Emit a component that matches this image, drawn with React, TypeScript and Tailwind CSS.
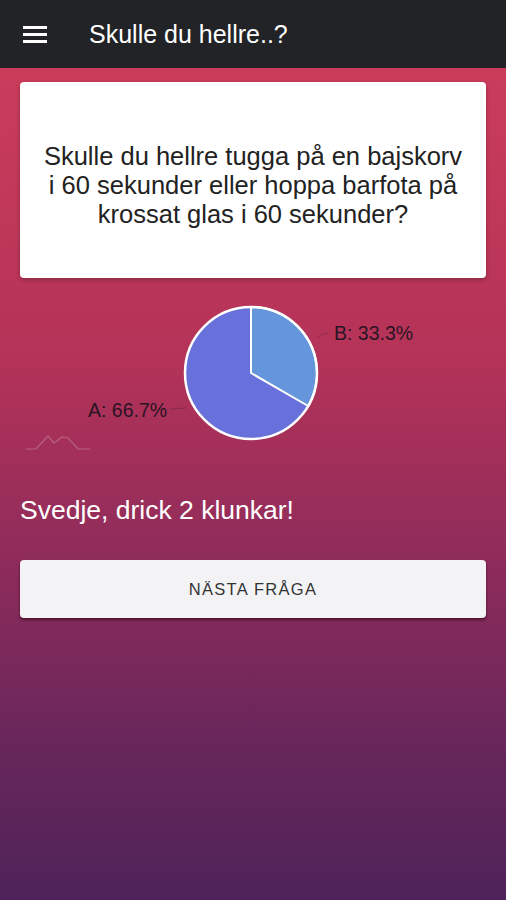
import React from "react";

function Pie() {
  const cx = 251, cy = 373, r = 66;
  const a = (deg: number) => {
    const rad = ((deg - 90) * Math.PI) / 180;
    return [cx + r * Math.cos(rad), cy + r * Math.sin(rad)];
  };
  const [bx, by] = a(120);
  return (
    <svg width="506" height="180" viewBox="0 290 506 180" className="block">
      <circle cx={cx} cy={cy} r={r} fill="#6870dc" />
      <path d={`M${cx} ${cy} L${cx} ${cy - r} A${r} ${r} 0 0 1 ${bx} ${by} Z`} fill="#6595db" stroke="#ffffff" strokeWidth="2" strokeLinejoin="round" />
      <circle cx={cx} cy={cy} r={r} fill="none" stroke="#ffffff" strokeWidth="2.5" />
      <path d="M318 337 Q322 334 328 333" stroke="#6a2a40" strokeWidth="1" fill="none" opacity="0.6" />
      <path d="M170 409 L186 408" stroke="#6a2a40" strokeWidth="1" fill="none" opacity="0.6" />
      <text x="334" y="340" fontSize="19.5" fill="#2a1424" fontFamily="'Liberation Sans', Arial, sans-serif">B: 33.3%</text>
      <text x="88" y="417" fontSize="19.5" fill="#2a1424" fontFamily="'Liberation Sans', Arial, sans-serif">A: 66.7%</text>
      <path d="M26 449 L36 449 L48 436 L54 443 L62 437 L68 438 L78 449 L90 449" stroke="#c98aa0" strokeWidth="1.2" fill="none" opacity="0.55" />
    </svg>
  );
}

export default function App() {
  return (
    <div className="w-[506px] h-[900px] flex flex-col overflow-hidden" style={{ fontFamily: "'Liberation Sans', Arial, sans-serif" }}>
      <header className="h-[68px] bg-[#222326] flex items-center shrink-0">
        <div className="ml-[23px] w-[24px] flex flex-col gap-[4px]">
          <div className="h-[3px] bg-white" />
          <div className="h-[3px] bg-white" />
          <div className="h-[3px] bg-white" />
        </div>
        <div className="ml-[42px] text-white text-[25px] leading-none">Skulle du hellre..?</div>
      </header>
      <main className="flex-1 bg-[linear-gradient(180deg,#cb3c5b_0%,#b43358_35%,#8a2b5b_62%,#6a275b_80%,#4e2359_100%)] px-[20px] pt-[14px] flex flex-col">
        <div className="bg-white rounded-[4px] h-[196px] flex items-center justify-center px-[4px] pt-[10px] shadow-[0_2px_4px_rgba(0,0,0,0.25)]">
          <p className="text-center text-[#222222] text-[25.5px] leading-[29px] whitespace-nowrap">
            Skulle du hellre tugga på en bajskorv<br />i 60 sekunder eller hoppa barfota på<br />krossat glas i 60 sekunder?
          </p>
        </div>
        <div className="-mx-[20px] mt-[12px]">
          <Pie />
        </div>
        <div className="mt-[26px] text-white text-[26.5px] leading-[28px]">Svedje, drick 2 klunkar!</div>
        <button className="mt-[36px] h-[58px] bg-[#f3f3f6] rounded-[4px] text-[#333333] text-[16.5px] tracking-[1.3px] shadow-[0_2px_3px_rgba(40,0,20,0.6)]">
          NÄSTA FRÅGA
        </button>
      </main>
    </div>
  );
}
